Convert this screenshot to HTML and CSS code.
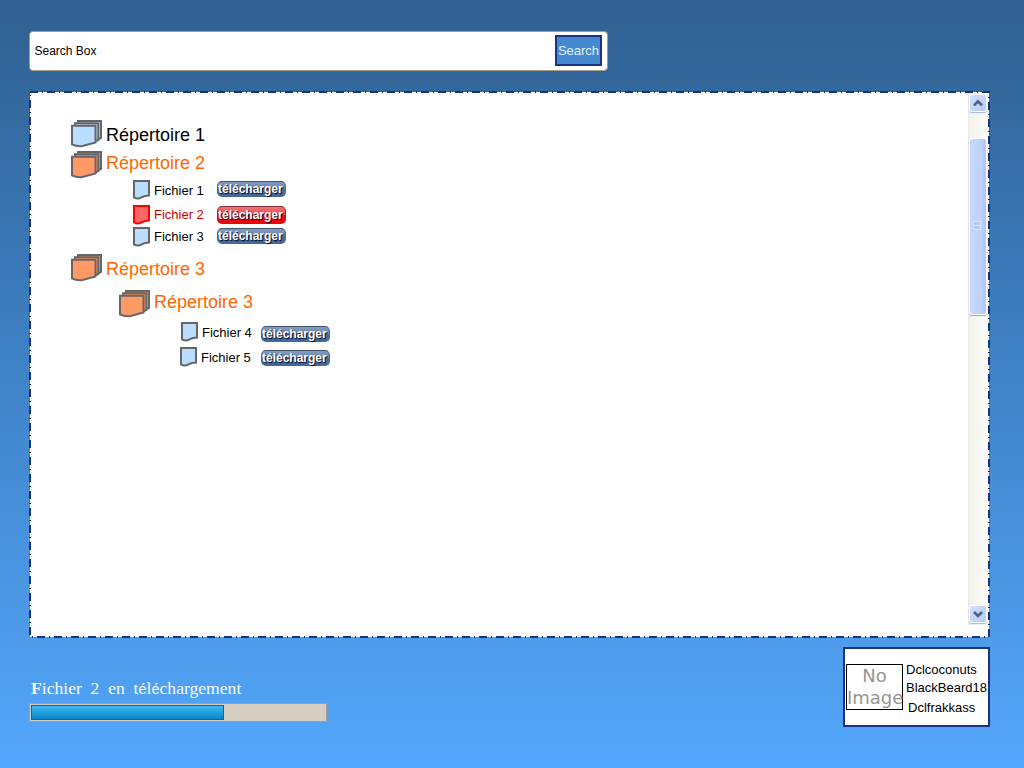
FILE: index.html
```html
<!DOCTYPE html>
<html lang="fr">
<head>
<meta charset="utf-8">
<title>Téléchargements</title>
<link rel="stylesheet" href="styles.css">
</head>
<body>
<svg width="0" height="0" class="defs">
  <symbol id="folder" viewBox="0 0 31 28">
    <path d="M7 1H30V18L26 20H7Z"/><path d="M4 3.3H27.3V20L23 22H4Z"/>
    <path d="M1 5.7H24.5V22.5L10.5 26.2Q5 26.5 1 24.3Z"/>
  </symbol>
  <symbol id="file" viewBox="0 0 17 20">
    <path d="M1 1H16V15.500Q12 15.500 8.500 17.300Q5 19.500 1 17.300Z"/>
  </symbol>
</svg>
<main class="page">
  <form class="search">
    <label class="search-text">Search Box</label>
    <button type="button" class="search-button">Search</button>
  </form>
  <section class="browser">
    <svg class="frame" width="961" height="547"><rect x="1" y="1" width="959" height="545"/></svg>
    <div class="tree">
      <div class="row r1"><svg class="folder blue"><use href="#folder"/></svg><span class="dir">Répertoire 1</span></div>
      <div class="row r2"><svg class="folder orange"><use href="#folder"/></svg><span class="dir hot">Répertoire 2</span></div>
      <div class="row f1"><svg class="file blue"><use href="#file"/></svg><span class="name">Fichier 1</span><button class="dl">télécharger</button></div>
      <div class="row f2"><svg class="file red"><use href="#file"/></svg><span class="name active">Fichier 2</span><button class="dl stop">télécharger</button></div>
      <div class="row f3"><svg class="file blue"><use href="#file"/></svg><span class="name">Fichier 3</span><button class="dl">télécharger</button></div>
      <div class="row r3"><svg class="folder orange"><use href="#folder"/></svg><span class="dir hot">Répertoire 3</span></div>
      <div class="row r4"><svg class="folder orange"><use href="#folder"/></svg><span class="dir hot">Répertoire 3</span></div>
      <div class="row f4"><svg class="file blue"><use href="#file"/></svg><span class="name">Fichier 4</span><button class="dl">télécharger</button></div>
      <div class="row f5"><svg class="file blue"><use href="#file"/></svg><span class="name">Fichier 5</span><button class="dl">télécharger</button></div>
    </div>
    <div class="scrollbar">
      <div class="arrow"><svg width="10" height="8"><path d="M1 6.300L5 2.300L9 6.300"/></svg></div>
      <div class="thumb"><i class="grip"></i></div>
      <div class="arrow"><svg width="10" height="8"><path d="M1 2L5 6L9 2"/></svg></div>
    </div>
  </section>
  <footer class="footer">
    <div class="download">
      <div class="status"><b>F</b>ichier&nbsp; 2&nbsp; en&nbsp; t<span class="accent">é</span>l<span class="accent">é</span>chargement</div>
      <div class="progress"><div class="bar"></div></div>
    </div>
    <div class="users">
      <div class="avatar">No<br>Image</div>
      <div class="people"><span>Dclcoconuts</span><span>BlackBeard18</span><span>Dclfrakkass</span></div>
    </div>
  </footer>
</main>
</body>
</html>
```
FILE: styles.css
```css
* { box-sizing: border-box; }
body { margin: 0; font-family: "Liberation Sans", Arial, sans-serif; color: #000; }
.defs { position: absolute; }
svg { display: block; flex: none; }
button { font-family: inherit; padding: 0; margin: 0; }
.page { width: 1024px; height: 768px; padding: 31px 0 0 29px; overflow: hidden; background: linear-gradient(#306090, #3e80c4 45%, #4f9eee 87%, #53a7fd); }
.search { display: flex; width: 579px; height: 40px; padding: 3px 5px 0 4.500px; background: #fff; border: 1px solid #a39a92; border-radius: 4px; justify-content: space-between; }
.search-text { font-size: 12px; line-height: 14px; padding-top: 9px; }
.search-button { width: 47px; height: 31px; border: 2px solid #1a3480; background: #4488cf; color: #e8f4ff; font-size: 13px; }
.browser { position: relative; display: flex; justify-content: space-between; width: 961px; height: 547px; margin-top: 20px; border: 1px solid transparent; background: #fff; background-clip: padding-box; }
.frame { position: absolute; inset: -1px; }
.frame rect { fill: none; stroke: #17327f; stroke-width: 2; stroke-dasharray: 8 4 1 4; }
.tree { padding: 28px 0 0 41px; }
.row { display: flex; align-items: flex-start; }
.folder { width: 31px; height: 28px; }
.file { width: 17px; height: 20px; }
.folder, .file { stroke: #666; stroke-width: 2; }
.blue { fill: #bbddff; }
.orange { fill: #ff9966; }
.red { fill: #ff6666; stroke: #f00; }
.dir { font-size: 18px; line-height: 20px; margin-left: 4px; padding-top: 5px; }
.hot { color: #ff6600; padding-top: 2px; }
.name { width: 63px; font-size: 13px; line-height: 15px; margin-left: 4px; padding-top: 3px; }
.active { color: #cc0000; padding-top: 2px; }
.dl { width: 69px; height: 16px; margin-top: 1px; padding: 0 0 1px 1px; border: 1px solid #476893; border-top-color: #41536d; border-radius: 5px; background: linear-gradient(#819bbd 0%, #6c89b1 48%, #4a6ea4 52%, #4169a2); color: #fff; font-size: 12px; font-weight: bold; line-height: 14px; text-align: left; text-indent: -1px; text-shadow: 1px 1px 1px #001; white-space: nowrap; }
.stop { height: 18px; border-color: #c8101a; border-top-color: #8f3038; background: linear-gradient(#f07078 0%, #ee4e58 48%, #ec101a 52%, #f00008); }
.r1 { height: 31px; }
.r2 { height: 29px; }
.f1, .f2, .f3 { margin-left: 62px; }
.f1 { height: 25px; }
.f2 { height: 22px; }
.f3 { height: 27px; }
.f3 .name { padding-top: 2px; }
.r3 { height: 36px; }
.r3 .dir { padding-top: 5px; }
.r4 { height: 32px; margin-left: 48px; }
.f4 { height: 25px; margin-left: 110px; }
.f5 { margin-left: 109px; }
.f4 .name { width: 59px; }
.f5 .name { width: 60px; }
.f4 .dl { margin-top: 4px; }
.f5 .dl { margin-top: 3px; }
.scrollbar { display: flex; flex-direction: column; width: 19px; height: 532px; margin: 1px 2px 0 0; padding: 1px 0 0; border-left: 1px solid #ecebe3; background: linear-gradient(90deg, #f1f0e9, #fdfdfa); }
.arrow { display: grid; place-items: center; width: 18px; height: 18px; border: 1px solid #fff; border-radius: 3px; background: linear-gradient(135deg, #d3e0ff, #b7cbf8); box-shadow: 0 1px 1px #a3b9dd; }
.arrow path { fill: none; stroke: #4d6185; stroke-width: 2.600; }
.thumb { display: grid; place-items: center; width: 18px; height: 177px; margin: 26px 0 290px; padding: 0 2px 2px 0; border: 1px solid #fff; border-radius: 3px; background: linear-gradient(90deg, #c8d8fc 0, #bdd1fc 70%, #acc6f8); box-shadow: 0 1px 1px #8facd9; }
.grip { width: 8px; height: 9px; border: 1px solid #d5e3ff; background: linear-gradient(#b5cbfa 3px, #d8e5ff 3px 4px, #b5cbfa 4px); }
.footer { display: flex; justify-content: space-between; width: 961px; margin-top: 9px; }
.download { padding-top: 31px; }
.status { height: 25px; padding-left: 2px; color: #f4faff; font: 17.600px/20px "Liberation Serif", serif; white-space: nowrap; }
.accent { font: 14.500px/1 "Liberation Sans", Arial, sans-serif; }
.progress { width: 298px; height: 19px; padding: 1px; border: 1px solid #a59e96; background: #d5cdc2; }
.bar { width: 193px; height: 15px; border: 1px solid #0860d9; background: linear-gradient(#40b9f5, #0787ca); }
.users { display: flex; width: 147px; height: 80px; padding: 15px 0 0 1px; border: 2px solid #1a3480; background: #fff; }
.avatar { width: 57px; height: 46px; border: 1px solid #000; color: #969696; font: 18px/22px "DejaVu Sans", sans-serif; text-align: center; }
.people { display: flex; flex-direction: column; font-size: 13px; line-height: 15px; padding-left: 3px; }
.people span:first-child { margin-top: -2px; }
.people span:nth-child(2) { margin-top: 3px; }
.people span:last-child { margin: 5px 0 0 2px; }
```
